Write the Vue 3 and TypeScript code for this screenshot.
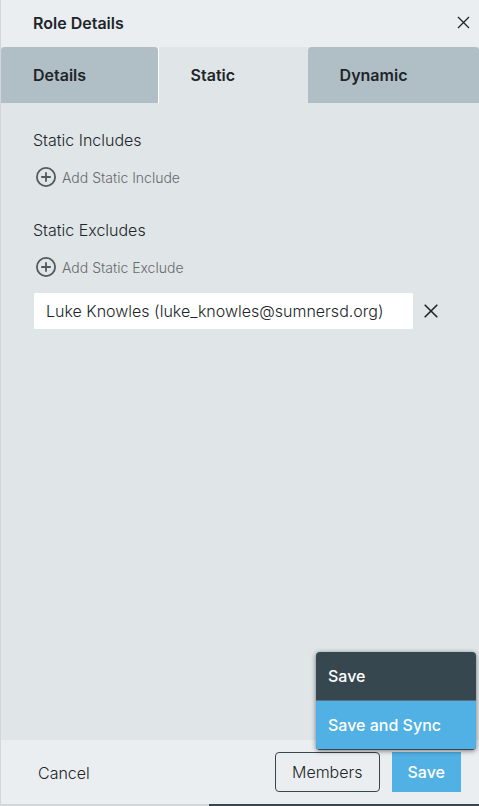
<script setup lang="ts">
import { ref } from 'vue'

type TabName = 'Details' | 'Static' | 'Dynamic'

const tabs: TabName[] = ['Details', 'Static', 'Dynamic']
const activeTab = ref<TabName>('Static')
const includes = ref<string[]>([])
const excludes = ref<string[]>(['Luke Knowles (luke_knowles@sumnersd.org)'])

function removeFrom(list: string[], index: number): void {
  list.splice(index, 1)
}
</script>

<template>
  <div class="page">
    <main class="panel">
      <header class="header">
        <h1 class="title">Role Details</h1>
        <button class="close" type="button" aria-label="Close">
          <svg width="13" height="13" viewBox="0 0 13 13" aria-hidden="true">
            <path d="M1 1L12 12M12 1L1 12" />
          </svg>
        </button>
      </header>

      <nav class="tabs" role="tablist">
        <button
          v-for="tab in tabs"
          :key="tab"
          class="tab"
          :class="{ active: tab === activeTab }"
          type="button"
          role="tab"
          :aria-selected="tab === activeTab"
          @click="activeTab = tab"
        >{{ tab }}</button>
      </nav>

      <div class="content">
        <section class="group">
          <h2 class="heading">Static Includes</h2>
          <button class="add" type="button" @click="includes.push('')">
            <svg width="20" height="20" viewBox="0 0 20 20" aria-hidden="true">
              <circle cx="10" cy="10" r="9.1" />
              <path d="M10 5.2V14.8M5.2 10H14.8" />
            </svg>
            <span>Add Static Include</span>
          </button>
          <div v-for="(_, i) in includes" :key="i" class="entry">
            <input v-model="includes[i]" class="field" type="text" aria-label="Static include">
            <button class="remove" type="button" aria-label="Remove" @click="removeFrom(includes, i)">
              <svg width="14" height="14" viewBox="0 0 14 14" aria-hidden="true">
                <path d="M.7 .7L13.3 13.3M13.3 .7L.7 13.3" />
              </svg>
            </button>
          </div>
        </section>

        <section class="group">
          <h2 class="heading">Static Excludes</h2>
          <button class="add" type="button" @click="excludes.push('')">
            <svg width="20" height="20" viewBox="0 0 20 20" aria-hidden="true">
              <circle cx="10" cy="10" r="9.1" />
              <path d="M10 5.2V14.8M5.2 10H14.8" />
            </svg>
            <span>Add Static Exclude</span>
          </button>
          <div v-for="(_, i) in excludes" :key="i" class="entry">
            <input v-model="excludes[i]" class="field" type="text" aria-label="Static exclude">
            <button class="remove" type="button" aria-label="Remove" @click="removeFrom(excludes, i)">
              <svg width="14" height="14" viewBox="0 0 14 14" aria-hidden="true">
                <path d="M.7 .7L13.3 13.3M13.3 .7L.7 13.3" />
              </svg>
            </button>
          </div>
        </section>
      </div>

      <footer class="footer">
        <button class="cancel" type="button">Cancel</button>
        <button class="members" type="button">Members</button>
        <div class="save-wrap">
          <button class="save" type="button" aria-haspopup="menu" aria-expanded="true">Save</button>
          <div class="menu" role="menu">
            <button class="item" type="button" role="menuitem">Save</button>
            <button class="item selected" type="button" role="menuitem">Save and Sync</button>
          </div>
        </div>
      </footer>
    </main>
    <div class="edge"></div>
  </div>
</template>

<style>
body {
  margin: 0;
  background: #c9cccf;
}
</style>

<style scoped>
.page {
  display: flex;
  flex-direction: column;
  min-height: 100vh;
  box-sizing: border-box;
  padding-left: 1px;
  font-family: Inter, "Liberation Sans", sans-serif;
  font-size: 16px;
  font-weight: 300;
  line-height: 20px;
  color: #212529;
  background: #d4d7d9;
}

button {
  padding: 0;
  border: 0;
  background: none;
  font: inherit;
  color: inherit;
  cursor: pointer;
}

svg {
  display: block;
  fill: none;
  stroke: currentColor;
}

.panel {
  display: flex;
  flex: 1;
  flex-direction: column;
  background: #e0e5e8;
}

.header {
  display: flex;
  align-items: center;
  justify-content: space-between;
  height: 45px;
  padding: 0 9px 2px 32px;
  background: #ebeef1;
}

.title {
  margin: 0;
  font-size: 16px;
  font-weight: 600;
}

.close svg {
  stroke-width: 1.3;
}

.tabs {
  display: flex;
}

.tab {
  flex: 1 1 auto;
  height: 56px;
  padding: 0 32px;
  border-radius: 4px 4px 0 0;
  background: #b0bec5;
  font-weight: 600;
  text-align: left;
}

.tab.active {
  padding-right: 33px;
  border-left: 1px solid #fff;
  border-radius: 0;
  background: #e0e5e8;
}

.content {
  display: flex;
  flex: 1;
  flex-direction: column;
  gap: 33px;
  padding: 27px 41px 27px 32px;
}

.heading {
  margin: 0 0 17px;
  font-size: 16px;
  font-weight: 300;
}

.add {
  display: flex;
  align-items: center;
  gap: 6px;
  padding-left: 3px;
  font-size: 14px;
  color: #666a6d;
}

.add span {
  padding-top: 1px;
  line-height: 19px;
}

.add svg {
  stroke: #54585b;
  stroke-width: 1.8;
}

.entry {
  display: flex;
  align-items: center;
  gap: 11px;
  margin-top: 16px;
  padding-left: 1px;
}

.field {
  flex: 1;
  min-width: 0;
  height: 36px;
  box-sizing: border-box;
  padding: 0 12px;
  border: 0;
  border-radius: 1px;
  background: #fff;
  font: inherit;
  color: inherit;
}

.remove svg {
  stroke-width: 1.6;
}

.footer {
  display: flex;
  align-items: center;
  height: 64px;
  padding: 0 18px 0 37px;
  background: #ebeef1;
}

.cancel {
  margin-right: auto;
  padding-top: 2px;
}

.members {
  height: 40px;
  padding: 0 16px;
  border: 1px solid #37474f;
  border-radius: 4px;
}

.save-wrap {
  position: relative;
  margin-left: 12px;
}

.save {
  display: block;
  height: 40px;
  padding: 0 16px;
  background: #51b0e4;
  font-weight: 500;
  color: #fff;
}

.menu {
  position: absolute;
  right: -15px;
  bottom: 42px;
  width: 160px;
  box-sizing: border-box;
  padding-bottom: 1px;
  overflow: hidden;
  border-radius: 4px;
  background: #37474f;
  box-shadow: 0 1px 5px rgba(0, 0, 0, 0.5);
}

.item {
  display: block;
  width: 100%;
  height: 48px;
  padding: 0 12px;
  font-weight: 500;
  text-align: left;
  color: #fff;
}

.item.selected {
  height: 49px;
  border-top: 1px solid #5e7078;
  background: #51b0e4;
}

.edge {
  height: 2px;
  margin-left: 208px;
  background: #37474f;
}
</style>
